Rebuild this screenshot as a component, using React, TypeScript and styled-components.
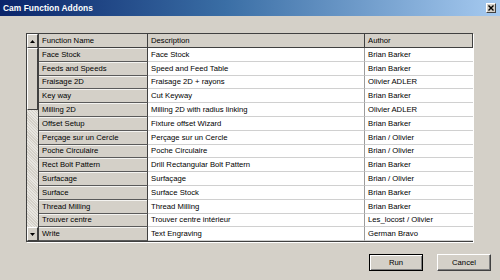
import React from "react";
import styled, {createGlobalStyle} from "styled-components";

const GlobalStyle = createGlobalStyle`
  html, body {
    margin: 0;
    padding: 0;
    background: #d4d0c8;
  }
  body {
    font-family: "Liberation Sans", Arial, sans-serif;
    font-size: 7.7px;
    color: #000;
  }
`

const WindowDiv = styled.div`
  width: 500px;
  height: 280px;
  display: flex;
  flex-direction: column;
  background: #d4d0c8;
  box-sizing: border-box;
  overflow: hidden;
`

const TitleBarDiv = styled.div`
  height: 16px;
  flex: none;
  display: flex;
  align-items: center;
  justify-content: space-between;
  padding: 0 4px 0 3px;
  background: linear-gradient(to right, #0a246a 0%, #3a6ea5 45%, #a6caf0 100%);
`

const TitleSpan = styled.span`
  color: #fff;
  font-weight: 700;
  font-size: 8.4px;
  letter-spacing: 0.05px;
`

const CloseButton = styled.div`
  width: 10px;
  height: 10px;
  box-sizing: border-box;
  background: #d4d0c8;
  border: 1px solid;
  border-color: #fff #404040 #404040 #fff;
  display: flex;
  align-items: center;
  justify-content: center;
`

const BodyDiv = styled.div`
  flex: 1;
  display: flex;
  flex-direction: column;
  padding: 17px 27px 0 26px;
`

const GridDiv = styled.div`
  display: grid;
  grid-template-columns: 12px 109px 217px 108px;
  grid-template-rows: 14px repeat(14, 13.8px);
  border: 1px solid #404040;
  box-shadow: 1px 1px 0 #fff;
  background: #fff;
`

const ScrollBarDiv = styled.div`
  grid-column: 1;
  grid-row: 1 / span 15;
  display: flex;
  flex-direction: column;
  background: #e6e3de;
  border-right: 1px solid #404040;
`

const ScrollButton = styled.div<{ $flex?: string }>`
  flex: ${({$flex}) => $flex ?? "0 0 14px"};
  box-sizing: border-box;
  background: #d4d0c8;
  border: 1px solid;
  border-color: #fff #404040 #404040 #fff;
  display: flex;
  align-items: center;
  justify-content: center;
`

const ScrollTrackDiv = styled.div`
  flex: 1;
  background: repeating-linear-gradient(45deg, #e8e6e1 0 1px, #d4d0c8 1px 2px);
`

const HeaderCell = styled.div`
  background: #d4d0c8;
  border-right: 1px solid #404040;
  border-bottom: 1px solid #404040;
  padding-left: 3px;
  display: flex;
  align-items: center;
  white-space: nowrap;
  overflow: hidden;
`

const NameCell = styled.div`
  background: #d4d0c8;
  border-right: 1px solid #404040;
  border-bottom: 1px solid #5a5a5a;
  box-shadow: inset 0 1px 0 #f4f3f0;
  padding-left: 3px;
  display: flex;
  align-items: center;
  white-space: nowrap;
  overflow: hidden;
`

const DataCell = styled.div<{ $last?: boolean }>`
  background: #fff;
  border-right: ${({$last}) => $last ? "none" : "1px solid #9c9c9c"};
  border-bottom: 1px solid #d0d0d0;
  padding-left: 3px;
  display: flex;
  align-items: center;
  white-space: nowrap;
  overflow: hidden;
`

const ButtonRowDiv = styled.div`
  display: flex;
  justify-content: flex-end;
  gap: 14px;
  margin-top: 12px;
  margin-right: -18px;
`

const DialogButton = styled.div<{ $default?: boolean }>`
  width: 54px;
  height: 17px;
  box-sizing: border-box;
  background: #d4d0c8;
  border: 1px solid;
  border-color: ${({$default}) => $default ? "#000" : "#fff #404040 #404040 #fff"};
  box-shadow: ${({$default}) => $default
    ? "inset 1px 1px 0 #fff, inset -1px -1px 0 #808080"
    : "inset -1px -1px 0 #808080"};
  display: flex;
  align-items: center;
  justify-content: center;
  font-size: 7.7px;
`

const rows = [
    ["Face Stock", "Face Stock", "Brian Barker"],
    ["Feeds and Speeds", "Speed and Feed Table", "Brian Barker"],
    ["Fraisage 2D", "Fraisage 2D + rayons", "Olivier ADLER"],
    ["Key way", "Cut Keyway", "Brian Barker"],
    ["Milling 2D", "Milling 2D with radius linking", "Olivier ADLER"],
    ["Offset Setup", "Fixture offset Wizard", "Brian Barker"],
    ["Perçage sur un Cercle", "Perçage sur un Cercle", "Brian / Olivier"],
    ["Poche Circulaire", "Poche Circulaire", "Brian / Olivier"],
    ["Rect Bolt Pattern", "Drill Rectangular Bolt Pattern", "Brian Barker"],
    ["Surfacage", "Surfaçage", "Brian / Olivier"],
    ["Surface", "Surface Stock", "Brian Barker"],
    ["Thread Milling", "Thread Milling", "Brian Barker"],
    ["Trouver centre", "Trouver centre intérieur", "Les_locost / Olivier"],
    ["Write", "Text Engraving", "German Bravo"],
]

const Arrow = ({up}: { up: boolean }) => (
    <svg width="5" height="3" viewBox="0 0 5 3">
        <polygon points={up ? "2.5,0 5,3 0,3" : "0,0 5,0 2.5,3"} fill="#000"/>
    </svg>
)

const App = () => {
    return (
        <>
            <GlobalStyle/>
            <WindowDiv>
                <TitleBarDiv>
                    <TitleSpan>Cam Function Addons</TitleSpan>
                    <CloseButton>
                        <svg width="6" height="6" viewBox="0 0 6 6">
                            <path d="M0.5 0.5 L5.5 5.5 M5.5 0.5 L0.5 5.5" stroke="#000" strokeWidth="1.4"/>
                        </svg>
                    </CloseButton>
                </TitleBarDiv>
                <BodyDiv>
                    <GridDiv>
                        <ScrollBarDiv>
                            <ScrollButton><Arrow up/></ScrollButton>
                            <ScrollButton $flex="0 0 62px"/>
                            <ScrollTrackDiv/>
                            <ScrollButton><Arrow up={false}/></ScrollButton>
                        </ScrollBarDiv>
                        <HeaderCell>Function Name</HeaderCell>
                        <HeaderCell>Description</HeaderCell>
                        <HeaderCell>Author</HeaderCell>
                        {rows.map(([name, description, author]) => (
                            <React.Fragment key={name}>
                                <NameCell>{name}</NameCell>
                                <DataCell>{description}</DataCell>
                                <DataCell $last>{author}</DataCell>
                            </React.Fragment>
                        ))}
                    </GridDiv>
                    <ButtonRowDiv>
                        <DialogButton $default>Run</DialogButton>
                        <DialogButton>Cancel</DialogButton>
                    </ButtonRowDiv>
                </BodyDiv>
            </WindowDiv>
        </>
    )
}

export default App
